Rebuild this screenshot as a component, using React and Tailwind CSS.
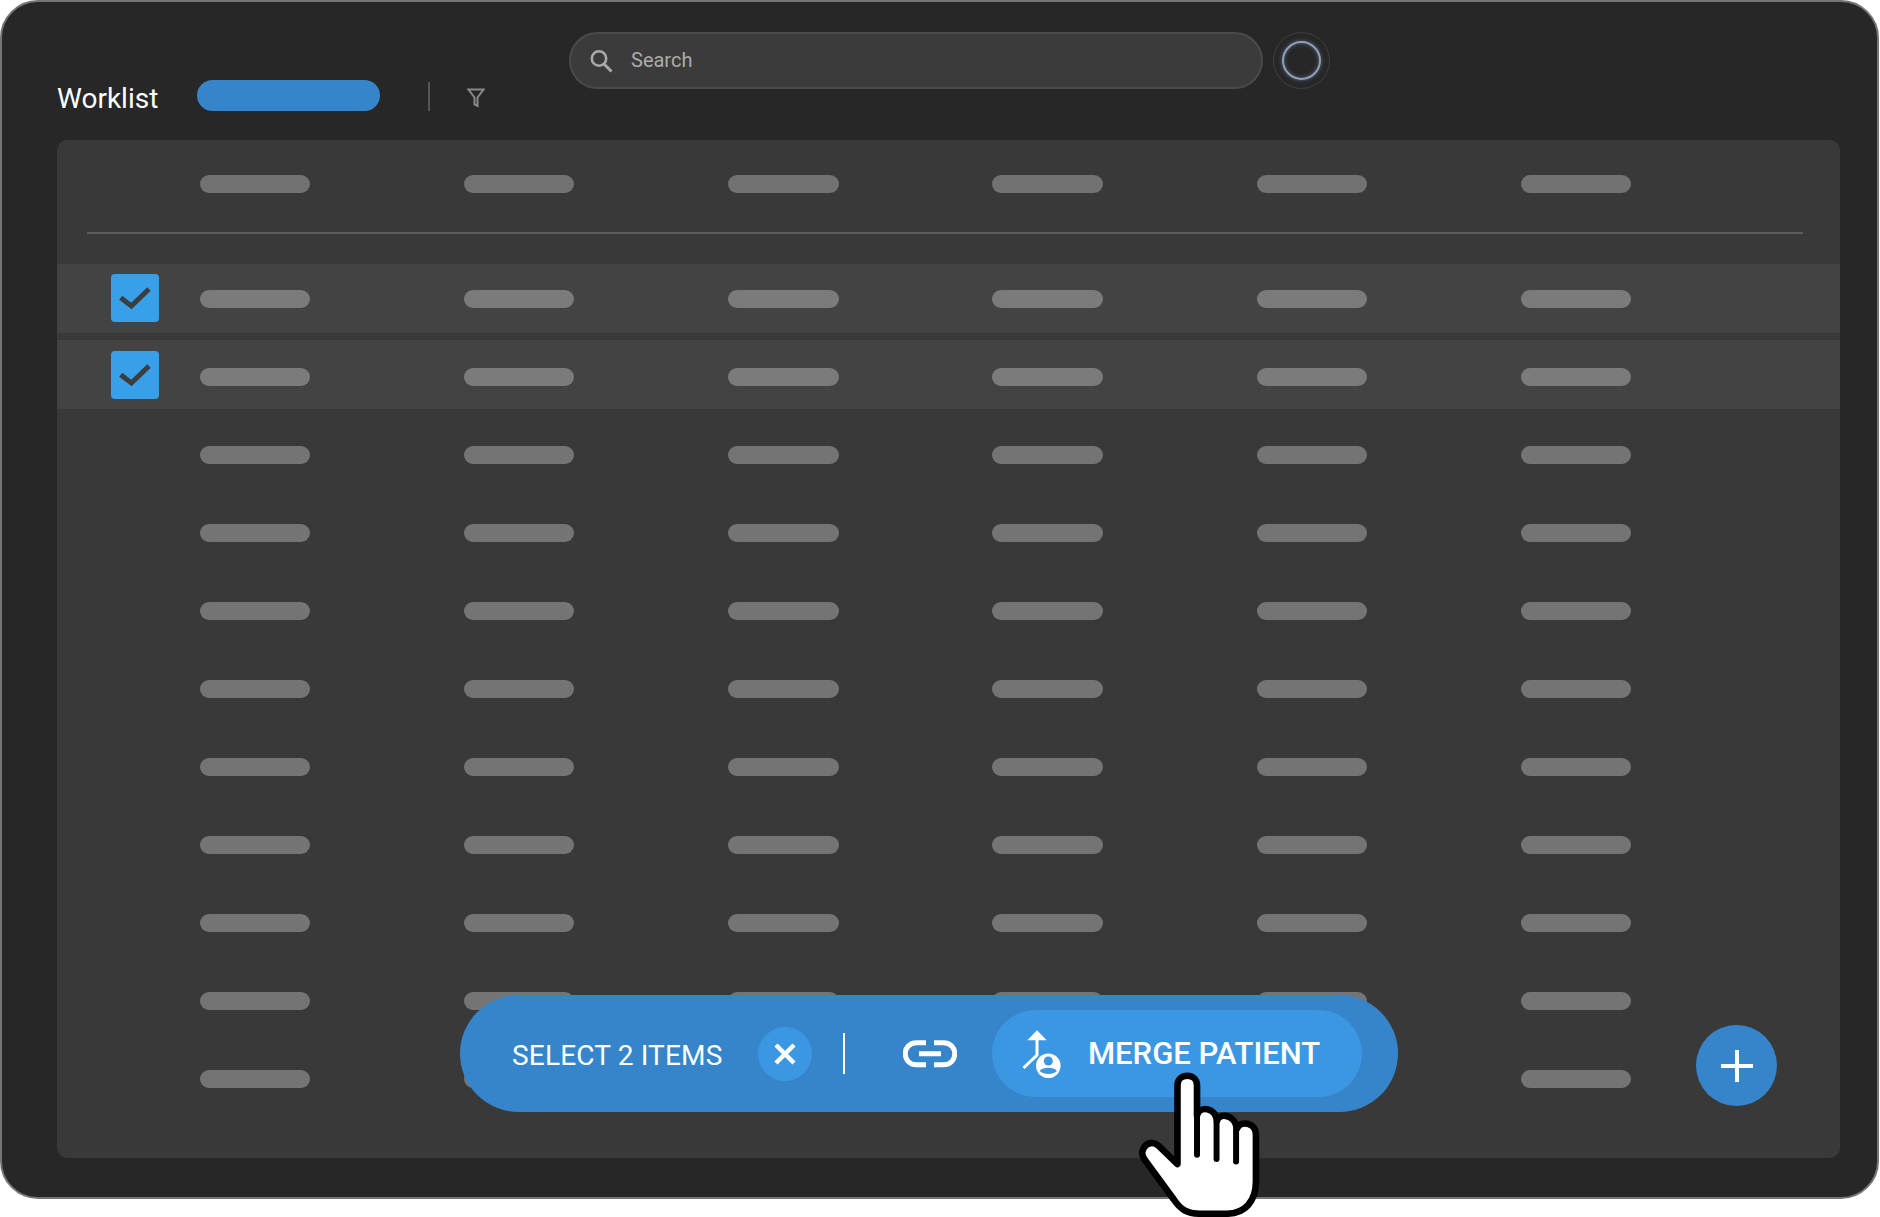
const columns = [0, 1, 2, 3, 4, 5];

function Pills({ selected, header }) {
  const color = selected ? 'bg-[#7b7b7b]' : header ? 'bg-[#727272]' : 'bg-[#747474]';
  return (
    <div className="grid grid-cols-[repeat(6,264.3px)]">
      {columns.map(col => (
        <div key={col} className={`w-[110.5px] h-[18px] rounded-full ${color}`} />
      ))}
    </div>
  );
}

function Checkbox() {
  return (
    <div className="w-[48px] h-[48px] rounded-[4px] bg-[#38a0e8]">
      <svg width="48" height="48" viewBox="0 0 48 48" fill="none">
        <path d="M9.7 23.7 L20.4 32 L38 15" stroke="#3d3d3d" strokeWidth="5" />
      </svg>
    </div>
  );
}

function SelectedRow({ className, checkClass, pillClass }) {
  return (
    <div className={`h-[69px] bg-[#434343] flex items-center ${className}`}>
      <div className={`w-[142.5px] pl-[54px] ${checkClass}`}>
        <Checkbox />
      </div>
      <div className={pillClass}>
        <Pills selected />
      </div>
    </div>
  );
}

function HandCursor() {
  return (
    <svg width="124" height="148" viewBox="530 300 372 447" fill="none" className="absolute left-[1135px] top-[1070px]">
      <path
        d="M651 578 V340 C651 302 710 302 710 340 V432 C716 402 766 404 770 448 C778 422 826 428 830 472 C840 446 888 450 888 490 V630 C888 690 855 728 800 728 H720 C680 728 660 715 640 685 L552 565 C545 555 540 542 550 528 C560 512 580 510 595 524 Z"
        fill="#fff"
        stroke="#000"
        strokeWidth="20"
        strokeLinejoin="round"
      />
      <path d="M710 400 V550 M769 450 V563 M828 475 V570" stroke="#000" strokeWidth="18" strokeLinecap="round" />
    </svg>
  );
}

function MergeIcon() {
  return (
    <svg width="40" height="48" viewBox="0 0 40 48" fill="none" className="shrink-0">
      <path d="M5.3 10.3 H24.7 L15 0.3 Z" fill="#fff" />
      <path d="M15 10 V25 L1.5 38" stroke="#fff" strokeWidth="3" />
      <circle cx="26.3" cy="35.7" r="13.6" fill="#3c97e3" />
      <circle cx="26.3" cy="35.7" r="12.3" fill="#fff" />
      <circle cx="26.3" cy="31" r="4.5" fill="#3c97e3" />
      <path d="M17.5 41 C20.5 36.8 32 36.8 35 41 C31 45 22 45 17.5 41 Z" fill="#3c97e3" />
    </svg>
  );
}

export default function App() {
  return (
    <div className="w-[1880px] h-[1217px] bg-white font-['Roboto',sans-serif]">
      <div className="relative w-[1879px] h-[1199px] box-border border-2 border-[#757575] rounded-[38px] bg-[#272727]">
        {/* TOP BAR */}
        <div className="flex pt-[30px] pl-[55px] h-[109px]">
          <div className="w-[512px] h-[31px] mt-[48px] flex items-center">
            <span className="w-[101px] text-[28px] leading-[31px] mt-[5px] text-white whitespace-nowrap">Worklist</span>
            <div className="ml-[39px] w-[183px] h-[31px] rounded-full bg-[#3685cb]" />
            <div className="ml-[48px] w-[2px] h-[29px] mt-[2px] bg-[#555555]" />
            <svg width="18" height="20" viewBox="0 0 18 20" fill="none" className="ml-[37px] mt-[4px]">
              <path d="M1.5 1.5 H16.5 L10.5 9.5 V18 L7.5 16.5 V9.5 Z" stroke="#8a8a8a" strokeWidth="2" />
            </svg>
          </div>
          <div className="w-[694px] h-[57px] rounded-full bg-[#3b3b3b] border-2 border-[#4a4a4a] flex items-center pl-[18px]">
            <svg width="24" height="24" viewBox="0 0 24 24" fill="none" className="shrink-0">
              <circle cx="10" cy="9.5" r="7.2" stroke="#a8a8a8" strokeWidth="2.6" />
              <path d="M15 15 L22.5 22.5" stroke="#a8a8a8" strokeWidth="3" />
            </svg>
            <span className="ml-[18px] text-[20px] mt-[-2px] text-[#ababab]">Search</span>
          </div>
          <div className="ml-[10px] w-[57px] h-[57px] rounded-full border border-[#3f3f3f] flex items-center justify-center">
            <div className="w-[39px] h-[39px] rounded-full border-[2.5px] border-[#93a1b8] shadow-[0_0_4px_#56647e,inset_0_0_4px_#56647e]" />
          </div>
        </div>

        {/* TABLE CARD */}
        <div className="ml-[55px] mt-[29px] w-[1783px] h-[1018px] rounded-[10px] bg-[#393939] pt-[35px]">
          <div className="pl-[142.5px]">
            <Pills header />
          </div>
          <div className="mt-[39px] ml-[30px] w-[1716px] h-[2px] bg-[#5c5c5c]" />
          <SelectedRow className="mt-[30px]" checkClass="-mt-[1px]" />
          <SelectedRow className="mt-[7px]" pillClass="mt-[5px]" />
          <div className="mt-[7px] pl-[142.5px]">
            {[0, 1, 2, 3, 4, 5, 6, 7, 8].map(row => (
              <div key={row} className="h-[78px] flex items-center">
                <Pills />
              </div>
            ))}
          </div>
        </div>

        {/* ADD BUTTON */}
        <button className="absolute left-[1694px] top-[1023px] w-[81px] h-[81px] rounded-full bg-[#3685cb] flex items-center justify-center">
          <svg width="32" height="32" viewBox="0 0 32 32" fill="none">
            <path d="M16 0 V32 M0 16 H32" stroke="#fff" strokeWidth="4" />
          </svg>
        </button>

        {/* SELECTION BAR */}
        <div className="absolute left-[458px] top-[993px] w-[938px] h-[117px] rounded-full bg-[#3685cb] flex items-center pl-[52px]">
          <span className="w-[246px] text-[28px] tracking-[0.17px] text-white whitespace-nowrap mt-[5px]">SELECT 2 ITEMS</span>
          <button className="w-[54px] h-[54px] rounded-full bg-[#3c97e3] flex items-center justify-center">
            <svg width="22" height="22" viewBox="0 0 22 22" fill="none">
              <path d="M2 2 L20 20 M20 2 L2 20" stroke="#fff" strokeWidth="4.5" />
            </svg>
          </button>
          <div className="ml-[31px] w-[2px] h-[41px] bg-white" />
          <svg width="54" height="28" viewBox="0 0 54 28" fill="none" className="ml-[58px] shrink-0">
            <path d="M23 2.8 H13.5 C-1.5 2.8 -1.5 24.8 13.5 24.8 H23 M31 2.8 H40.5 C55.5 2.8 55.5 24.8 40.5 24.8 H31 M16 13.8 H38" stroke="#fff" strokeWidth="5" />
          </svg>
          <button className="ml-[35px] w-[370px] h-[87px] rounded-full bg-[#3c97e3] flex items-center pl-[30px]">
            <MergeIcon />
            <span className="ml-[26px] mt-[2px] text-[31px] font-medium text-white whitespace-nowrap">MERGE PATIENT</span>
          </button>
        </div>

        <HandCursor />
      </div>
    </div>
  );
}
